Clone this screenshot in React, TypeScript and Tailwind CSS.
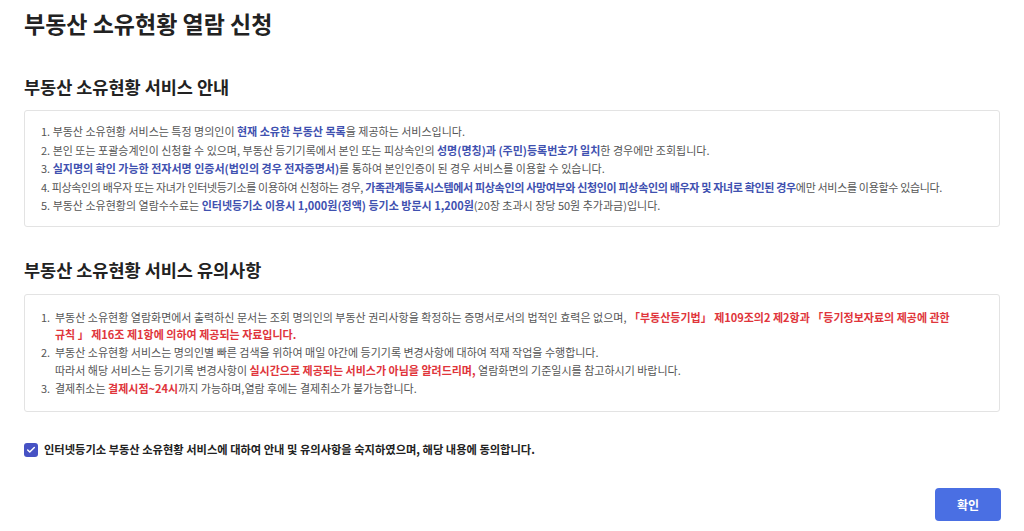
import { Check } from "lucide-react";

const blue = "font-bold text-[#3f51b0]";
const red = "font-bold text-[#e0353b]";

export default function App() {
  return (
    <div
      className="min-h-screen bg-white text-[#333] px-6 pt-[5px]"
      style={{ fontFamily: '"Noto Sans CJK KR", "Noto Sans", sans-serif' }}
    >
      <h1 className="text-[23px] font-bold text-[#222] leading-[36px]">부동산 소유현황 열람 신청</h1>

      <h2 className="mt-[33px] text-[17.5px] font-bold text-[#222] leading-[26px]">부동산 소유현황 서비스 안내</h2>
      <div className="mt-[10px] border border-[#e3e3e3] rounded-[3px] px-4 py-[11px] text-[11px] leading-[18.5px] text-[#555]">
        <ol>
          <li>
            1. 부동산 소유현황 서비스는 특정 명의인이 <span className={blue}>현재 소유한 부동산 목록</span>을 제공하는 서비스입니다.
          </li>
          <li>
            2. 본인 또는 포괄승계인이 신청할 수 있으며, 부동산 등기기록에서 본인 또는 피상속인의{" "}
            <span className={blue}>성명(명칭)과 (주민)등록번호가 일치</span>한 경우에만 조회됩니다.
          </li>
          <li>
            3. <span className={blue}>실지명의 확인 가능한 전자서명 인증서(법인의 경우 전자증명서)</span>를 통하여 본인인증이 된 경우 서비스를 이용할 수 있습니다.
          </li>
          <li className="tracking-[-0.03em] whitespace-nowrap">
            4. 피상속인의 배우자 또는 자녀가 인터넷등기소를 이용하여 신청하는 경우,{" "}
            <span className={blue}>가족관계등록시스템에서 피상속인의 사망여부와 신청인이 피상속인의 배우자 및 자녀로 확인된 경우</span>에만 서비스를 이용할수 있습니다.
          </li>
          <li>
            5. 부동산 소유현황의 열람수수료는{" "}
            <span className={blue}>인터넷등기소 이용시 1,000원(정액) 등기소 방문시 1,200원</span>(20장 초과시 장당 50원 추가과금)입니다.
          </li>
        </ol>
      </div>

      <h2 className="mt-[30px] text-[17.5px] font-bold text-[#222] leading-[26px]">부동산 소유현황 서비스 유의사항</h2>
      <div className="mt-[11px] border border-[#e3e3e3] rounded-[3px] pl-4 pr-4 py-[14px] text-[11px] leading-[17.8px] text-[#555]">
        <ol>
          <li className="flex">
            <span className="w-[14px] shrink-0">1.</span>
            <span>
              부동산 소유현황 열람화면에서 출력하신 문서는 조회 명의인의 부동산 권리사항을 확정하는 증명서로서의 법적인 효력은 없으며,{" "}
              <span className={red}>
                「부동산등기법」 제109조의2 제2항과 「등기정보자료의 제공에 관한
                <br />
                규칙 」 제16조 제1항에 의하여 제공되는 자료입니다.
              </span>
            </span>
          </li>
          <li className="flex">
            <span className="w-[14px] shrink-0">2.</span>
            <span>
              부동산 소유현황 서비스는 명의인별 빠른 검색을 위하여 매일 야간에 등기기록 변경사항에 대하여 적재 작업을 수행합니다.
              <br />
              따라서 해당 서비스는 등기기록 변경사항이 <span className={red}>실시간으로 제공되는 서비스가 아님을 알려드리며,</span> 열람화면의 기준일시를 참고하시기 바랍니다.
            </span>
          </li>
          <li className="flex">
            <span className="w-[14px] shrink-0">3.</span>
            <span>
              결제취소는 <span className={red}>결제시점~24시</span>까지 가능하며,열람 후에는 결제취소가 불가능합니다.
            </span>
          </li>
        </ol>
      </div>

      <label className="mt-[29px] flex items-center gap-[6px]">
        <span className="w-[14px] h-[14px] rounded-[3px] bg-[#4652c4] flex items-center justify-center">
          <Check className="w-[10px] h-[10px] text-white" strokeWidth={3.5} />
        </span>
        <span className="text-[11.25px] font-bold text-[#222]">
          인터넷등기소 부동산 소유현황 서비스에 대하여 안내 및 유의사항을 숙지하였으며, 해당 내용에 동의합니다.
        </span>
      </label>

      <div className="mt-[30px] flex justify-end">
        <button className="w-[66px] h-[33px] rounded-[4px] bg-[#4a6fe3] text-white text-[12px] font-semibold mr-[-1px]">
          확인
        </button>
      </div>
    </div>
  );
}
